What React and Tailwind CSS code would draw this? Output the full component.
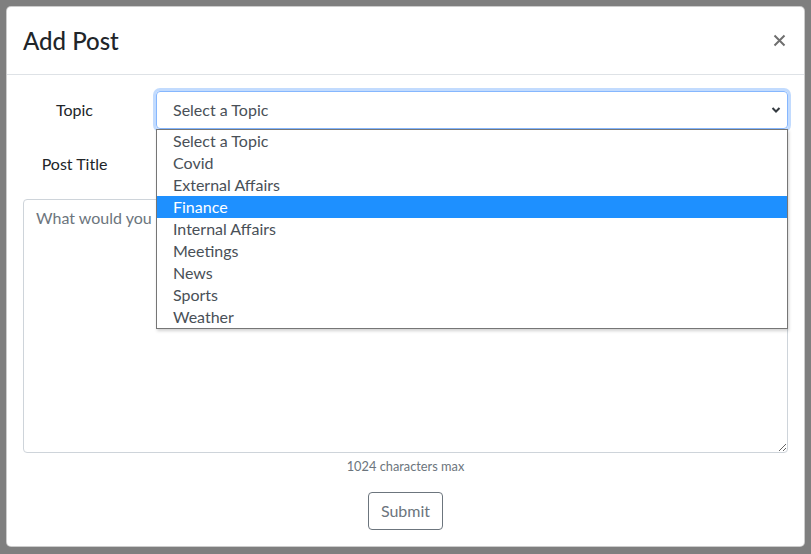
import React from 'react';

const topics = ['Select a Topic', 'Covid', 'External Affairs', 'Finance', 'Internal Affairs', 'Meetings', 'News', 'Sports', 'Weather'];

const App = () => {
    return (
        <div className="min-h-[554px] w-full bg-[#7f7f7f] pt-[6px] pl-[6px] pr-[6px]" style={{ fontFamily: 'Lato, "Noto Sans", sans-serif' }}>
            <div className="w-[799px] bg-white rounded-[5px] border border-[#0003]">
                {/* header */}
                <div className="flex justify-between items-center px-4 py-4 border-b border-[#dee2e6] h-[68px]">
                    <h4 className="text-[24px] leading-[36px] font-medium text-[#212529]">Add Post</h4>
                    <button className="w-[13px] h-[13px] mr-[2px]" aria-label="Close">
                        <svg width="13" height="13" viewBox="0 0 13 13">
                            <path d="M1.5 1.5l10 10M11.5 1.5l-10 10" stroke="#6f6f6f" strokeWidth="2" />
                        </svg>
                    </button>
                </div>

                {/* body */}
                <div className="p-4">
                    <div className="flex items-center h-[38px] relative">
                        <label className="w-[133px] -ml-[15px] text-center text-[16px] text-[#212529]">Topic</label>
                        <div className="ml-[15px] flex-1 h-[38px] border border-[#86b7fe] rounded-[4px] shadow-[0_0_0_3px_rgba(13,110,253,0.25)] flex items-center justify-between pl-[16px] pr-[6px]">
                            <span className="text-[16px] text-[#495057]">Select a Topic</span>
                            <svg width="10" height="8" viewBox="0 0 10 8">
                                <path d="M1.5 2l3.5 3.5L8.5 2" fill="none" stroke="#343a40" strokeWidth="2" />
                            </svg>
                        </div>
                        {/* opened native list */}
                        <div className="absolute left-[133px] top-[38px] right-0 z-10 bg-white border border-[#767676] shadow-[1px_2px_3px_rgba(0,0,0,0.18)]">
                            {topics.map((t) => (
                                <div
                                    key={t}
                                    className={t === 'Finance'
                                        ? 'h-[22px] leading-[22px] pl-[16px] text-[16px] bg-[#1e90ff] text-white'
                                        : 'h-[22px] leading-[22px] pl-[16px] text-[16px] text-[#495057]'}
                                >
                                    {t}
                                </div>
                            ))}
                        </div>
                    </div>

                    <div className="flex items-center h-[38px] mt-4">
                        <label className="w-[133px] -ml-[15px] text-center text-[16px] text-[#212529]">Post Title</label>
                        <input className="ml-[15px] flex-1 h-[38px] border border-[#ced4da] rounded-[4px] px-3" />
                    </div>

                    <textarea
                        className="mt-4 block w-full h-[254px] border border-[#ced4da] rounded-[4px] px-3 py-[6px] text-[16px] text-[#495057] placeholder-[#6c757d] outline-none"
                        placeholder="What would you like to post?"
                    />
                    <div className="mt-1 text-center text-[12.8px] leading-[19px] text-[#6c757d]">1024 characters max</div>

                    <div className="flex justify-center mt-4">
                        <button className="h-[38px] px-3 border border-[#6c757d] rounded-[4px] text-[16px] text-[#6c757d]">Submit</button>
                    </div>
                </div>
            </div>
        </div>
    );
};

export default App;
